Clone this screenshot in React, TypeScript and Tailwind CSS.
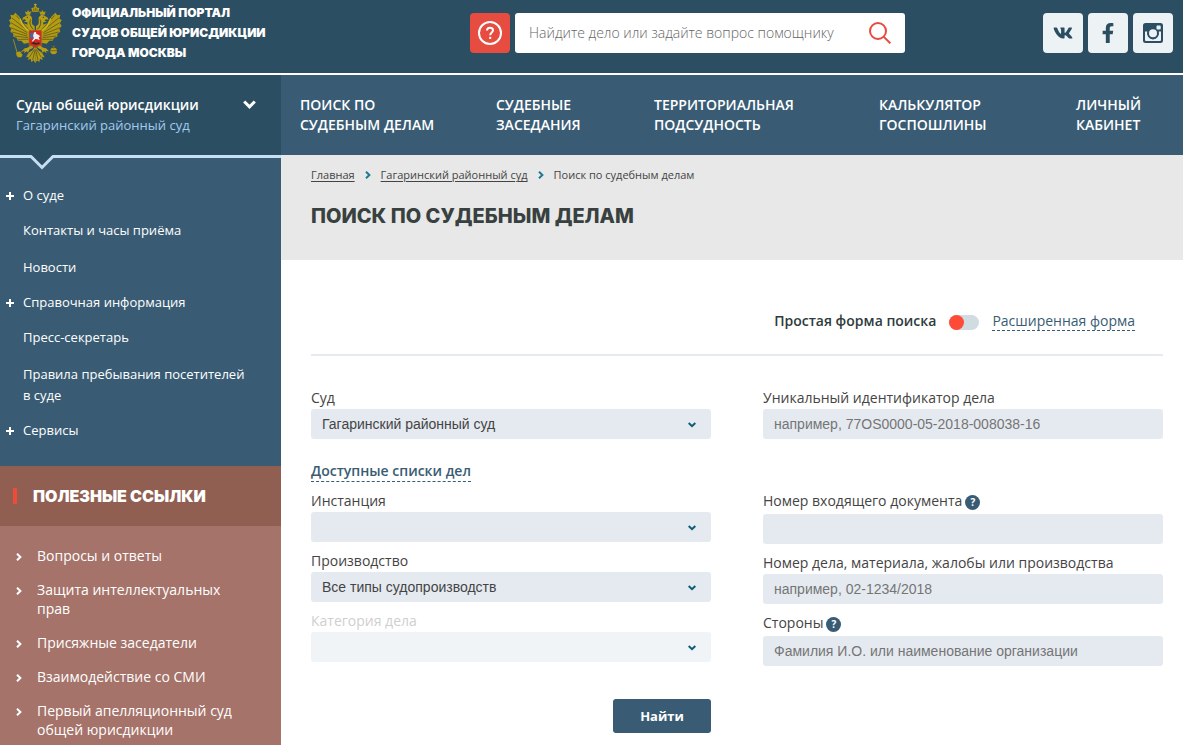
import { useState } from 'react';
import { FaFacebookF, FaVk } from 'react-icons/fa';

const topNav = [
  ['Поиск по', 'судебным делам'],
  ['Судебные', 'заседания'],
  ['Территориальная', 'подсудность'],
  ['Калькулятор', 'госпошлины'],
  ['Личный', 'кабинет'],
];

const sideNav = [
  { title: 'О суде', nested: true },
  { title: 'Контакты и часы приёма', nested: false },
  { title: 'Новости', nested: false },
  { title: 'Справочная информация', nested: true },
  { title: 'Пресс-секретарь', nested: false },
  { title: 'Правила пребывания посетителей в суде', nested: false },
  { title: 'Сервисы', nested: true },
];

const usefulLinks = [
  'Вопросы и ответы',
  'Защита интеллектуальных прав',
  'Присяжные заседатели',
  'Взаимодействие со СМИ',
  'Первый апелляционный суд общей юрисдикции',
];

function Wing() {
  return (
    <g>
      <path
        d="M96 92 L84 74 L70 70 L58 50 L46 38 L40 46 L31 44 L34 56 L27 60 L32 70 L27 78 L34 86 L31 95 L40 101 L40 110 L50 113 L54 122 L64 122 L72 131 L88 128 Z"
        fill="#b39b12"
      />
      <g fill="none" stroke="#4d4a26" strokeWidth="2">
        <path d="M86 88 L48 46" />
        <path d="M84 93 L36 54" />
        <path d="M82 98 L33 68" />
        <path d="M82 103 L32 83" />
        <path d="M82 108 L36 96" />
        <path d="M84 113 L43 108" />
        <path d="M86 118 L54 118" />
      </g>
      <path d="M92 96 C80 90 72 82 66 70 L60 56" fill="none" stroke="#d0b91c" strokeWidth="4" />
      {/* neck, head and beak */}
      <path
        d="M104 100 L104 78 C96 76 95 68 96 61 C98 52 92 44 84 45 C77 46 76 50 70 52 L66 59 L75 58 L78 62 L71 65 L82 67 C81 78 86 88 96 96 Z"
        fill="#b79f15"
      />
      <circle cx="82" cy="52" r="2" fill="#33351f" />
      <path d="M92 58 C87 68 91 80 100 88" fill="none" stroke="#5b5120" strokeWidth="3" />
      <path d="M78 44 L75 34 L81 37 L84 30 L88 36 L94 34 L91 44 Z" fill="#b39b12" />
      {/* leg and tail feathers */}
      <path d="M94 132 C88 142 82 144 74 145 L65 154 L74 153 L72 160 L80 154 L84 158 L88 149 L100 143 Z" fill="#b79f15" />
      <path d="M106 138 L98 150 L86 158 L78 172 L86 171 L84 180 L92 176 L94 186 L101 181 L106 190 Z" fill="#b39b12" />
      <path d="M103 148 L88 172 M105 150 L98 180" stroke="#4d4a26" strokeWidth="2" />
    </g>
  );
}

function Emblem() {
  return (
    <svg viewBox="24 9 168 183" className="h-[61px] w-14 shrink-0" aria-hidden="true">
      <Wing />
      <g transform="translate(212 0) scale(-1 1)">
        <Wing />
      </g>
      <path d="M90 40 C94 32 98 34 106 35 C114 34 118 32 122 40" fill="none" stroke="#8b7a1c" strokeWidth="2" />
      <path d="M97 35 L94 24 L100 23 L106 17 L112 23 L118 24 L115 35 Z" fill="#b39b12" />
      <path d="M106 11 V20 M102 14 H110" stroke="#c9b21a" strokeWidth="3" />
      <path d="M101 26 V33 M106 23 V33 M111 26 V33" stroke="#5b5120" strokeWidth="2" />
      {/* sceptre and orb */}
      <path d="M74 149 L48 166 M40 118 L52 160" stroke="#a08b18" strokeWidth="3" />
      <path d="M48 158 L58 154 L68 164 L64 172 L53 172 Z" fill="#b39b12" />
      <circle cx="161" cy="153" r="10" fill="#b39b12" />
      <path d="M151 152 H171 M161 136 V146 M157 140 H165" stroke="#75681c" strokeWidth="3" />
      <path d="M87 91 H125 V136 L114 138 L106 144 L98 138 L87 136 Z" fill="#d9271f" stroke="#8d7a1b" strokeWidth="2" />
      <path d="M91 100 L98 97 L101 106 L97 117 L91 114 Z" fill="#3e6ab0" />
      <path
        d="M102 97 L108 96 L109 102 L115 104 L121 109 L116 112 L119 121 L113 118 L106 117 L98 125 L96 122 L102 114 L99 108 Z"
        fill="#edf0f2"
      />
      <path d="M93 130 L101 126 L108 129 L117 127 L120 132 L106 134 Z" fill="#302a25" />
    </svg>
  );
}

function Chevron({ className }: { className: string }) {
  return (
    <svg viewBox="0 0 8 6" className={className} fill="none" stroke="currentColor" strokeWidth="2" aria-hidden="true">
      <path d="M0.7 1 L4 4.2 L7.3 1" />
    </svg>
  );
}

function Arrow({ className }: { className: string }) {
  return (
    <svg viewBox="0 0 6 8" className={className} fill="none" stroke="currentColor" strokeWidth="2" aria-hidden="true">
      <path d="M1 0.7 L4.4 4 L1 7.3" />
    </svg>
  );
}

function InstagramIcon() {
  return (
    <svg viewBox="0 0 20 20" className="size-5" aria-hidden="true">
      <path
        fillRule="evenodd"
        fill="currentColor"
        d="M2.5 0 H17.5 A2.5 2.5 0 0 1 20 2.5 V17.5 A2.5 2.5 0 0 1 17.5 20 H2.5 A2.5 2.5 0 0 1 0 17.5 V2.5 A2.5 2.5 0 0 1 2.5 0 Z M14.3 2.5 A0.8 0.8 0 0 0 13.5 3.3 V5.7 A0.8 0.8 0 0 0 14.3 6.5 H16.9 A0.8 0.8 0 0 0 17.7 5.7 V3.3 A0.8 0.8 0 0 0 16.9 2.5 Z M2 8.4 V17 A1 1 0 0 0 3 18 H17 A1 1 0 0 0 18 17 V8.4 H15.8 A6.1 6.1 0 1 1 4.2 8.4 Z M10 6.2 A4 4 0 1 0 10 14.2 A4 4 0 1 0 10 6.2 Z"
      />
    </svg>
  );
}

function Help({ label }: { label: string }) {
  return (
    <button
      type="button"
      aria-label={label}
      className="flex size-[15px] items-center justify-center self-center rounded-full bg-[#395c74] text-[10px] leading-none font-bold text-white"
    >
      ?
    </button>
  );
}

function SelectField(props: { id: string; label: string; value?: string; disabled?: boolean }) {
  return (
    <div>
      <label htmlFor={props.id} className={`block leading-[22px] ${props.disabled ? 'text-[#cfcfcf]' : ''}`}>
        {props.label}
      </label>
      <div className="relative">
        <select
          id={props.id}
          disabled={props.disabled}
          className="block h-[30px] w-full appearance-none rounded-[3px] bg-[#e5eaf1] px-[11px] font-['Liberation_Sans',Arial,sans-serif] text-sm text-[#444] disabled:bg-[#f0f4f7] disabled:opacity-100"
        >
          <option>{props.value}</option>
        </select>
        <Chevron className="pointer-events-none absolute top-[13px] right-[15px] h-[6px] w-2 text-[#0d5c78]" />
      </div>
    </div>
  );
}

function TextField(props: { id: string; label: string; placeholder?: string; help?: boolean }) {
  return (
    <div>
      <div className={`flex items-start gap-[3px] ${props.help ? 'h-6' : ''}`}>
        <label htmlFor={props.id} className="leading-[22px]">
          {props.label}
        </label>
        {props.help && <Help label={`Подсказка: ${props.label}`} />}
      </div>
      <input
        id={props.id}
        type="text"
        placeholder={props.placeholder}
        className="block h-[30px] w-full rounded-[3px] bg-[#e5eaf1] px-[11px] font-['Liberation_Sans',Arial,sans-serif] text-sm text-[#444] placeholder:text-[#757575]"
      />
    </div>
  );
}

function Header() {
  return (
    <header className="flex h-[75px] items-start border-b-2 border-white bg-[#2c4e62]">
      <a href="#" className="flex w-[470px] shrink-0 gap-2 pt-[3px] pl-2 text-white">
        <Emblem />
        <span className="font-['Inter',sans-serif] text-xs leading-5 font-black uppercase">
          Официальный портал
          <br />
          судов общей юрисдикции
          <br />
          города Москвы
        </span>
      </a>
      <form className="flex max-w-[435px] flex-1 gap-[5px] pt-[13px]">
        <button type="button" aria-label="Помощник" className="flex size-10 shrink-0 items-center justify-center rounded bg-[#e64c40] text-white">
          <svg viewBox="0 0 24 24" className="size-6" fill="none" stroke="currentColor" strokeWidth="2" aria-hidden="true">
            <circle cx="12" cy="12" r="11" />
            <path d="M9 9.6 C9 7.6 10.3 6.7 12 6.7 C13.8 6.7 15 7.8 15 9.3 C15 11.6 12.2 11.5 12.2 14.2" />
            <path d="M12.2 15.8 V18" />
          </svg>
        </button>
        <div className="flex h-10 flex-1 items-center rounded-[3px] bg-white px-[14px]">
          <input
            type="text"
            aria-label="Поиск"
            placeholder="Найдите дело или задайте вопрос помощнику"
            className="min-w-0 flex-1 text-sm font-light text-[#444] outline-none placeholder:text-[#666]"
          />
          <button type="submit" aria-label="Искать" className="text-[#e64c40]">
            <svg viewBox="0 0 22 22" className="size-[22px]" fill="none" stroke="currentColor" strokeWidth="2" aria-hidden="true">
              <circle cx="9" cy="9" r="8" />
              <path d="M14.6 14.6 L21.3 21.3" />
            </svg>
          </button>
        </div>
      </form>
      <div className="ml-auto flex gap-[5px] pt-[13px] pr-[10px] text-[#2c4e62]">
        <a href="#" aria-label="ВКонтакте" className="flex size-10 items-center justify-center rounded bg-[#edf2f5]">
          <FaVk className="size-5" />
        </a>
        <a href="#" aria-label="Facebook" className="flex size-10 items-center justify-center rounded bg-[#edf2f5]">
          <FaFacebookF className="size-5" />
        </a>
        <a href="#" aria-label="Instagram" className="flex size-10 items-center justify-center rounded bg-[#edf2f5]">
          <InstagramIcon />
        </a>
      </div>
    </header>
  );
}

function Sidebar() {
  return (
    <aside className="flex w-[281px] shrink-0 flex-col bg-[#395c74] text-white">
      <button type="button" className="relative flex h-[83px] justify-between border-b-3 border-[#c8def3] bg-[#2c4e62] pt-5 pr-[25px] pl-4 text-left text-sm leading-5">
        <span>
          <span className="block font-semibold">Суды общей юрисдикции</span>
          <span className="block text-[13px] text-[#a3cbee]">Гагаринский районный суд</span>
        </span>
        <svg viewBox="0 0 13 9" className="mt-[5px] h-[9px] w-[13px]" fill="none" stroke="currentColor" strokeWidth="3" aria-hidden="true">
          <path d="M1.2 1.5 L6.5 6.8 L11.8 1.5" />
        </svg>
        <svg viewBox="0 0 24 15" className="absolute top-20 left-[30px] h-[15px] w-6" aria-hidden="true">
          <path d="M1 0 H23 L12 12 Z" fill="#2c4e62" />
          <path d="M0.5 1 L12 12.5 L23.5 1" fill="none" stroke="#c8def3" strokeWidth="3" />
        </svg>
      </button>
      <nav className="pt-[27px] pr-8 pb-[25px] pl-[6px] text-[13px] leading-[21px]">
        <ul>
          {sideNav.map((item, i) => {
            const afterPlain = i > 0 && !item.nested && !sideNav[i - 1].nested;
            return (
              <li key={item.title} className={`flex ${i === 0 ? '' : afterPlain ? 'mt-4' : 'mt-[14px]'}`}>
                <span className="w-[17px] shrink-0 pt-[7px]">
                  {item.nested && (
                    <svg viewBox="0 0 8 8" className="size-2" stroke="currentColor" strokeWidth="2" aria-hidden="true">
                      <path d="M4 0 V8 M0 4 H8" />
                    </svg>
                  )}
                </span>
                <a href="#">{item.title}</a>
              </li>
            );
          })}
        </ul>
      </nav>
      <section className="flex flex-1 flex-col bg-[#a57369]">
        <div className="flex h-[60px] items-center gap-4 bg-[#905f52] pl-[13px]">
          <span className="h-4 w-1 bg-[#ee4b3b]" />
          <h2 className="font-['Inter',sans-serif] text-base font-black uppercase">Полезные ссылки</h2>
        </div>
        <ul className="flex flex-col gap-[15px] pt-5 pr-9 pl-4 text-sm leading-[19px]">
          {usefulLinks.map((title) => (
            <li key={title} className="flex">
              <span className="w-[21px] shrink-0 pt-[7px]">
                <Arrow className="h-2 w-[6px]" />
              </span>
              <a href="#">{title}</a>
            </li>
          ))}
        </ul>
      </section>
    </aside>
  );
}

function SearchForm() {
  const [extended, setExtended] = useState(false);

  return (
    <form className="px-5 pt-[50px] pl-[30px] text-sm text-[#444]">
      <div className="flex h-[46px] items-start justify-end gap-[13px] border-b-2 border-[#e5eaf1] pr-7 leading-[22px]">
        <label htmlFor="form-mode" className="font-semibold text-[#2f3b3c]">
          Простая форма поиска
        </label>
        <input
          id="form-mode"
          type="checkbox"
          role="switch"
          checked={extended}
          onChange={() => setExtended(!extended)}
          className="mt-[5px] h-[15px] w-[30px] appearance-none rounded-full bg-[#d1dce2] before:block before:size-[15px] before:rounded-full before:bg-[#ff4a38] checked:before:ml-auto"
        />
        <a href="#" className="h-[21px] border-b border-dashed border-[#395c74] text-[#395c74]">
          Расширенная форма
        </a>
      </div>

      <div className="mt-[31px] grid grid-cols-2 gap-x-[52px]">
        <SelectField id="court" label="Суд" value="Гагаринский районный суд" />
        <TextField id="uid" label="Уникальный идентификатор дела" placeholder="например, 77OS0000-05-2018-008038-16" />
      </div>

      <div className="mt-[21px] flex">
        <a href="#" className="h-[22px] border-b border-dashed border-[#395c74] leading-[22px] font-semibold text-[#395c74]">
          Доступные списки дел
        </a>
      </div>

      <div className="mt-2 grid grid-cols-2 gap-x-[52px]">
        <div className="flex flex-col gap-2">
          <SelectField id="instance" label="Инстанция" />
          <SelectField id="process" label="Производство" value="Все типы судопроизводств" />
          <SelectField id="category" label="Категория дела" disabled />
          <button type="submit" className="mt-[29px] h-[34px] w-[98px] self-end rounded-[3px] bg-[#395c74] text-[13px] font-bold text-white">
            Найти
          </button>
        </div>
        <div className="flex flex-col gap-2">
          <TextField id="document" label="Номер входящего документа" help />
          <TextField id="case" label="Номер дела, материала, жалобы или производства" placeholder="например, 02-1234/2018" />
          <TextField id="sides" label="Стороны" placeholder="Фамилия И.О. или наименование организации" help />
        </div>
      </div>
    </form>
  );
}

export default function App() {
  return (
    <div className="flex min-h-screen flex-col bg-white font-['Open_Sans',sans-serif]">
      <Header />
      <div className="flex flex-1">
        <Sidebar />
        <main className="min-w-0 flex-1">
          <nav className="grid h-20 grid-cols-[196fr_158fr_225fr_197fr_126fr] bg-[#395c74] pt-5 text-sm leading-5 font-semibold text-white uppercase">
            {topNav.map(([first, second]) => (
              <a key={first} href="#" className="pl-[19px]">
                {first}
                <br />
                {second}
              </a>
            ))}
          </nav>
          <div className="h-[105px] bg-[#e8e8e8] pt-[10px] pl-[30px]">
            <nav className="flex items-center gap-[10px] text-[11px] leading-5 text-[#444]">
              <a href="#" className="underline underline-offset-2">
                Главная
              </a>
              <Arrow className="h-2 w-[6px] text-[#217a94]" />
              <a href="#" className="underline underline-offset-2">
                Гагаринский районный суд
              </a>
              <Arrow className="h-2 w-[6px] text-[#217a94]" />
              <span>Поиск по судебным делам</span>
            </nav>
            <h1 className="mt-[17px] font-['Inter',sans-serif] text-xl leading-7 font-extrabold text-[#38413f] uppercase">Поиск по судебным делам</h1>
          </div>
          <SearchForm />
        </main>
      </div>
    </div>
  );
}
